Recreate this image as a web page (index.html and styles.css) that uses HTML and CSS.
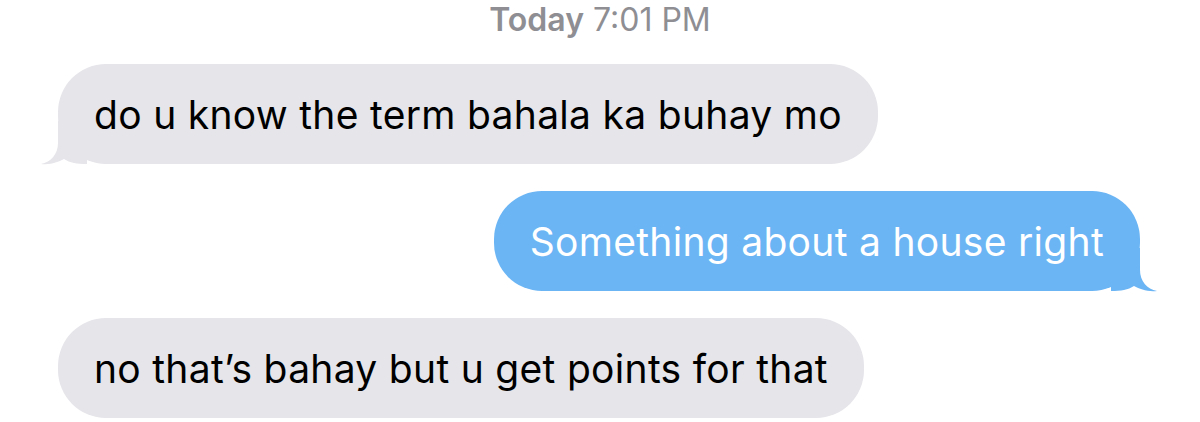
FILE: index.html
```html
<!DOCTYPE html>
<html>
<head>
<meta charset="utf-8">
<link rel="stylesheet" href="styles.css">
</head>
<body>
<div class="thread">
  <div class="stamp"><b>Today</b> 7:01 PM</div>
  <div class="bubble in">
    <span>do u know the term bahala ka buhay mo</span>
    <svg class="tail tail-left" width="46" height="44" viewBox="0 0 46 44"><path d="M17 0 L17 22 C17 33 10 41 0 43 C10 44 17 41 23 38 C29 42 36 43 46 43 L46 0 Z" fill="#e5e5ea"/></svg>
  </div>
  <div class="bubble out">
    <span>Something about a house right</span>
    <svg class="tail tail-right" width="46" height="44" viewBox="0 0 46 44"><path d="M29 0 L29 22 C29 33 36 41 46 43 C36 44 29 41 23 38 C17 42 10 43 0 43 L0 0 Z" fill="#6bb5f5"/></svg>
  </div>
  <div class="bubble in last">
    <span>no that’s bahay but u get points for that</span>
  </div>
</div>
</body>
</html>
```
FILE: styles.css
```css
html, body {
  margin: 0;
  padding: 0;
  background: #fff;
}
.thread {
  width: 1200px;
  height: 422px;
  overflow: hidden;
  display: flex;
  flex-direction: column;
  font-family: "Inter", "Liberation Sans", sans-serif;
}
.stamp {
  flex-shrink: 0;
  height: 39px;
  line-height: 39px;
  margin-bottom: 25px;
  text-align: center;
  font-size: 32px;
  color: #8e8e93;
}
.stamp b {
  font-weight: 600;
}
.bubble {
  flex-shrink: 0;
  position: relative;
  height: 100px;
  box-sizing: border-box;
  display: flex;
  align-items: center;
  padding: 0 36px;
  border-radius: 48px;
  font-size: 39px;
  letter-spacing: 0.3px;
  margin-bottom: 27px;
}
.bubble span {
  position: relative;
  z-index: 1;
}
.in {
  align-self: flex-start;
  margin-left: 58px;
  background: #e5e5ea;
  color: #000;
}
.out {
  align-self: flex-end;
  margin-right: 60px;
  background: #6bb5f5;
  color: #fff;
}
.tail {
  position: absolute;
  bottom: -1px;
}
.tail-left {
  left: -17px;
}
.tail-right {
  right: -17px;
}
```
